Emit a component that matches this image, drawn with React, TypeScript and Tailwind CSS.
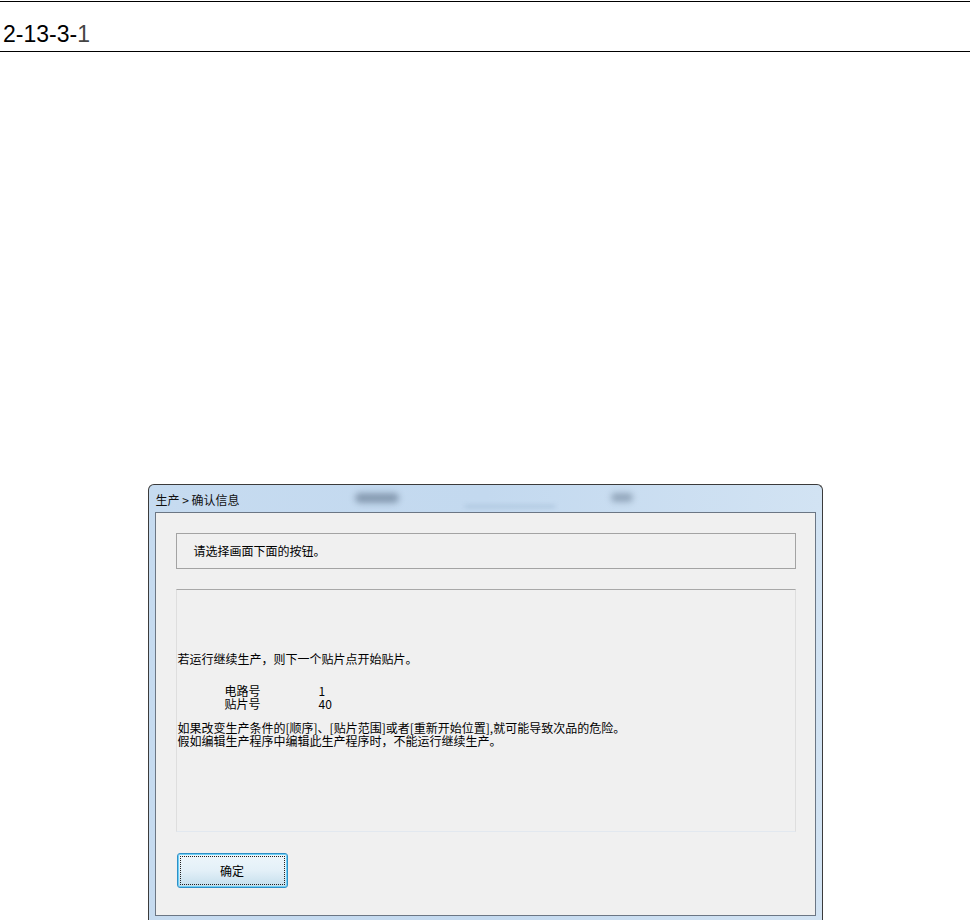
const cjk = { fontFamily: '"SimSun", "Noto Sans CJK SC", sans-serif' }

const Header = () => (
    <div className="pt-px">
        <div className="border-t border-black h-[51px] border-b flex items-start pt-[19px] pl-[3px]">
            <span className="text-[23px] text-black leading-[27px]" style={{ fontFamily: '"Liberation Sans", Arial, sans-serif' }}>
                2-13-3-<span className="text-[#444]">1</span>
            </span>
        </div>
    </div>
)

const TitleBar = () => (
    <div className="relative h-[27px] flex items-center">
        <span className="absolute left-[200px] top-[8px] w-[44px] h-[10px] rounded-full bg-[#5d7188] opacity-60 blur-[3px]" />
        <span className="absolute left-[456px] top-[8px] w-[22px] h-[9px] rounded-full bg-[#5d7188] opacity-50 blur-[3px]" />
        <span className="absolute left-[310px] top-[20px] w-[90px] h-[3px] bg-[#9fb9d3] opacity-60 blur-[2px]" />
        <span className="relative pl-px pt-[2px] text-[12px] text-[#111]" style={cjk}>
            生产 &gt; 确认信息
        </span>
    </div>
)

const OkButton = () => (
    <button className="w-[111px] h-[35px] rounded-[3px] border border-[#2f8fc7] shadow-[0_0_0_1px_#6fd0f5_inset] bg-gradient-to-b from-[#eef6fb] via-[#e3f0f8] to-[#c4deec] p-[2px]">
        <div className="w-full h-full border border-dotted border-[#222] flex items-center justify-center text-[12px] text-black" style={cjk}>
            确定
        </div>
    </button>
)

const Dialog = () => (
    <div className="mx-auto w-[675px] h-[436px] rounded-t-[6px] border border-b-0 border-[#3b3b3b] bg-gradient-to-r from-[#c6dbf0] via-[#c3d9ef] to-[#d2e3f3] px-[6px] overflow-hidden">
        <TitleBar />
        <div className="w-[661px] h-[404px] border border-[#6b7684] bg-[#f0f0f0] pt-[20px] pl-[20px]">
            <div className="w-[620px] h-[36px] border border-[#a3a3a3] flex items-center pl-[17px] text-[12px] text-black" style={cjk}>
                请选择画面下面的按钮。
            </div>
            <div className="mt-[20px] w-[620px] h-[243px] border border-[#dedede] border-t-[#a8a8a8] border-b-[#e2e8ef] pt-[63px] pl-px text-[12px] text-black" style={cjk}>
                <div className="leading-[12px]">若运行继续生产，则下一个贴片点开始贴片。</div>
                <div className="mt-[19px] pl-[47px] leading-[13px]">
                    <div className="flex">
                        <span className="w-[94px]">电路号</span>
                        <span>1</span>
                    </div>
                    <div className="flex">
                        <span className="w-[94px]">贴片号</span>
                        <span>40</span>
                    </div>
                </div>
                <div className="mt-[11px] leading-[13px]">
                    <div>如果改变生产条件的[顺序]、[贴片范围]或者[重新开始位置],就可能导致次品的危险。</div>
                    <div>假如编辑生产程序中编辑此生产程序时，不能运行继续生产。</div>
                </div>
            </div>
            <div className="mt-[21px] pl-px">
                <OkButton />
            </div>
        </div>
    </div>
)

export default function App() {
    return (
        <div className="w-[970px] h-[921px] bg-white overflow-hidden">
            <Header />
            <div className="h-[432px]" />
            <Dialog />
        </div>
    )
}
